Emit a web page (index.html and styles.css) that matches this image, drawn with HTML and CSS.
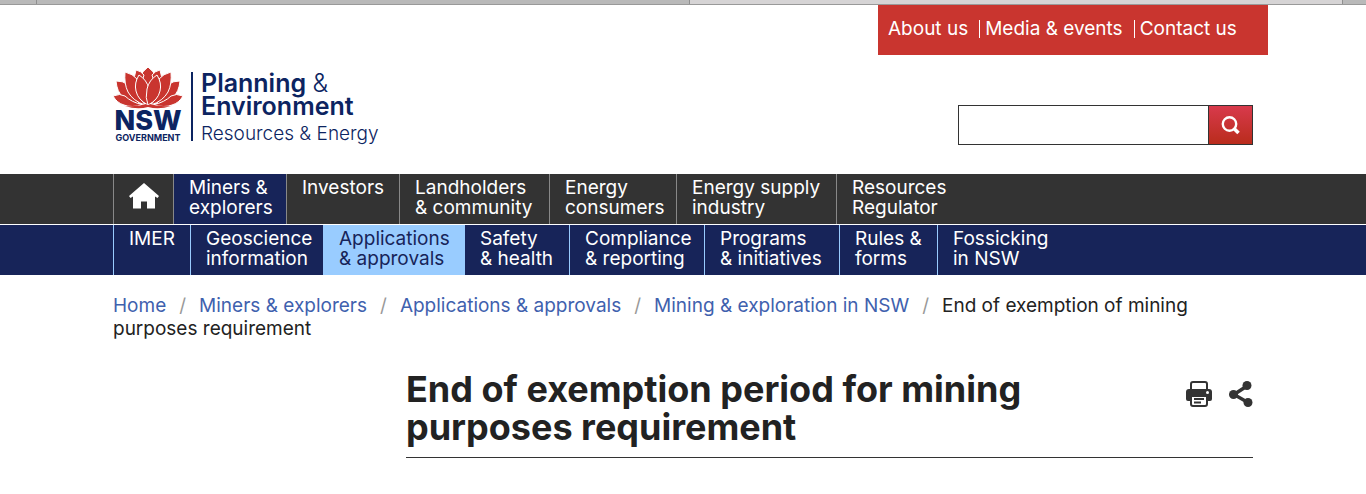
FILE: index.html
```html
<!DOCTYPE html>
<html lang="en">
<head>
    <meta charset="UTF-8">
    <meta name="viewport" content="width=device-width, initial-scale=1.0">
    <title>End of exemption period for mining purposes requirement</title>
    <link rel="stylesheet" href="styles.css">
</head>
<body>

<div class="tab-strip">
    <div class="tab tab-pinned"></div>
    <div class="tab"></div>
    <div class="tab tab-active"></div>
    <div class="tab tab-add"></div>
</div>

<header class="header">
    <a class="logo" href="#">
        <span class="crest">
            <svg class="waratah" width="70" height="42" viewBox="0 0 70 42" aria-hidden="true">
                <g fill="#c9352f" stroke="#fff" stroke-width="1">
                    <path d="M35 0Q40 4 43 9L41 26H29L27 9Q30 4 35 0Z"/>
                    <path d="M23 3Q28 4 31 8L26 24L19 20Z"/>
                    <path d="M47 3Q42 4 39 8L44 24L51 20Z"/>
                    <path d="M3 14Q10 14 14 17Q16 26 27 37Q17 36 10 30Q4 25 3 14Z"/>
                    <path d="M67 14Q60 14 56 17Q54 26 43 37Q53 36 60 30Q66 25 67 14Z"/>
                    <path d="M0 29Q7 26 12 29Q18 35 30 38Q18 41 11 38Q4 36 0 29Z"/>
                    <path d="M70 29Q63 26 58 29Q52 35 40 38Q52 41 59 38Q66 36 70 29Z"/>
                    <path d="M12 5Q20 7 24 12Q22 25 32 38Q20 34 15 25Q11 17 12 5Z"/>
                    <path d="M58 5Q50 7 46 12Q48 25 38 38Q50 34 55 25Q59 17 58 5Z"/>
                    <path d="M26 8Q34 13 36 22Q38 31 35 38Q25 33 23 24Q21 16 26 8Z"/>
                    <path d="M44 8Q36 13 34 22Q32 31 35 38Q45 33 47 24Q49 16 44 8Z"/>
                </g>
                <path d="M12 39Q24 40 33 37Q35 39 37 37Q46 40 58 39Q46 43 35 40Q24 43 12 39Z" fill="#c9352f"/>
            </svg>
            <span class="nsw">NSW</span>
            <span class="government">GOVERNMENT</span>
        </span>
        <span class="department">
            <span class="dept-name">Planning <span class="amp">&amp;</span><br>Environment</span>
            <span class="division">Resources &amp; Energy</span>
        </span>
    </a>
    <div class="header-right">
        <nav class="top-links">
            <a href="#">About us</a>
            <a href="#">Media &amp; events</a>
            <a href="#">Contact us</a>
        </nav>
        <form class="search">
            <input type="text" class="search-box" aria-label="Search">
            <button type="button" class="search-button" aria-label="Search">
                <svg width="20" height="20" viewBox="0 0 20 20" fill="none" stroke="#fff">
                    <circle cx="8.500" cy="9" r="6.700" stroke-width="2.400"/>
                    <path d="M12.500 13l5 5" stroke-width="3.600"/>
                </svg>
            </button>
        </form>
    </div>
</header>

<nav class="main-nav">
    <ul class="nav-list main-list">
        <li><a class="home" href="#" aria-label="Home">
            <svg width="30" height="26" viewBox="0 0 30 26" fill="#fff">
                <path d="M15 0L30 13L28.500 15L26 13.500V25.500H18V18.500H12V25.500H4V13.500L1.500 15L0 13Z"/>
            </svg>
        </a></li>
        <li><a class="current" href="#">Miners &amp;<br>explorers</a></li>
        <li><a href="#">Investors</a></li>
        <li><a href="#">Landholders<br>&amp; community</a></li>
        <li><a href="#">Energy<br>consumers</a></li>
        <li><a href="#">Energy supply<br>industry</a></li>
        <li><a href="#">Resources<br>Regulator</a></li>
    </ul>
</nav>

<nav class="sub-nav">
    <ul class="nav-list sub-list">
        <li><a href="#">IMER</a></li>
        <li><a href="#">Geoscience<br>information</a></li>
        <li class="selected"><a href="#">Applications<br>&amp; approvals</a></li>
        <li><a href="#">Safety<br>&amp; health</a></li>
        <li><a href="#">Compliance<br>&amp; reporting</a></li>
        <li><a href="#">Programs<br>&amp; initiatives</a></li>
        <li><a href="#">Rules &amp;<br>forms</a></li>
        <li><a href="#">Fossicking<br>in NSW</a></li>
    </ul>
</nav>

<main class="container">
    <div class="breadcrumb">
        <a href="#">Home</a><span class="slash">/</span><a href="#">Miners &amp; explorers</a><span class="slash">/</span><a href="#">Applications &amp; approvals</a><span class="slash">/</span><a href="#">Mining &amp; exploration in NSW</a><span class="slash">/</span>End of exemption of mining purposes requirement
    </div>

    <div class="page-title">
        <h1>End of exemption period for mining purposes requirement</h1>
        <div class="tools">
            <button type="button" aria-label="Print">
                <svg width="26" height="26" viewBox="0 0 26 26">
                    <path d="M5 9V3Q5 1 7 1H19Q21 1 21 3V9" fill="none" stroke="#333" stroke-width="2"/>
                    <path d="M3 8H23Q26 8 26 11V18Q26 20 24 20H2Q0 20 0 18V11Q0 8 3 8Z" fill="#333"/>
                    <circle cx="21.500" cy="11.500" r="1.500" fill="#fff"/>
                    <path d="M5 15H21V23Q21 25 19 25H7Q5 25 5 23Z" fill="#fff" stroke="#333" stroke-width="2"/>
                    <path d="M8 18H18M8 21.500H15" stroke="#333" stroke-width="2"/>
                </svg>
            </button>
            <button type="button" aria-label="Share">
                <svg width="24" height="26" viewBox="0 0 24 26" fill="#333">
                    <path d="M18 5L5 13.500L19 21.500" fill="none" stroke="#333" stroke-width="3.500"/>
                    <circle cx="18" cy="4.500" r="4.500"/>
                    <circle cx="4.500" cy="13.500" r="4.500"/>
                    <circle cx="19" cy="21.500" r="4.500"/>
                </svg>
            </button>
        </div>
    </div>
</main>

</body>
</html>
```
FILE: styles.css
```css
* {
    box-sizing: border-box;
}
body {
    margin: 0;
    font-family: Inter, Arial, sans-serif;
    font-size: 19px;
    color: #222;
    background-color: #fff;
}
a {
    text-decoration: none;
}

/* Browser tab edge */
.tab-strip {
    display: flex;
    height: 5px;
    background-color: #b9b9b9;
    border-bottom: 1px solid #999;
}
.tab {
    flex: 1;
    border-right: 1px solid #8f8f8f;
}
.tab-pinned {
    flex: 0 0 37px;
}
.tab-active {
    background-color: #d6d4d5;
}
.tab-add {
    flex: 0 0 23px;
    border-right: 0;
}

/* Header */
.header {
    display: flex;
    justify-content: space-between;
    max-width: 1170px;
    margin: 0 auto;
    padding-bottom: 29px;
}
.logo {
    display: flex;
    padding: 62px 0 0 15px;
    color: #0c2461;
}
.crest {
    display: flex;
    flex-direction: column;
    align-items: center;
    width: 70px;
}
.waratah {
    display: block;
}
.nsw {
    font-size: 27px;
    line-height: 24px;
    font-weight: 800;
}
.government {
    font-size: 9px;
    line-height: 9px;
    font-weight: 700;
}
.department {
    display: flex;
    flex-direction: column;
    height: 69px;
    margin: 5px 0 0 8px;
    padding-left: 8px;
    border-left: 2px solid #0c2461;
}
.dept-name {
    font-size: 25px;
    line-height: 23px;
    font-weight: 600;
}
.amp {
    font-weight: 300;
}
.division {
    padding-top: 4px;
    font-size: 19px;
    line-height: 23px;
    font-weight: 300;
}
.header-right {
    display: flex;
    flex-direction: column;
    align-items: flex-end;
}
.top-links {
    display: flex;
    align-items: flex-start;
    width: 390px;
    height: 50px;
    padding: 15px 10px;
    background-color: #c9352f;
}
.top-links a {
    padding-right: 11px;
    line-height: 18px;
    color: #fff;
}
.top-links a + a {
    padding-left: 5px;
    border-left: 1px solid #fff;
}
.search {
    display: flex;
    width: 295px;
    height: 40px;
    margin: 50px 15px 0 0;
    border: 1px solid #333;
}
.search-box {
    flex: 1;
    min-width: 0;
    padding: 0 10px;
    border: 0;
    font: inherit;
}
.search-button {
    display: flex;
    align-items: center;
    justify-content: center;
    width: 44px;
    padding: 0;
    border: 0;
    border-left: 1px solid #333;
    background: linear-gradient(#d83a4c, #b92c1c);
}

/* Navigation */
.main-nav {
    background-color: #333;
    border-bottom: 1px solid #fff;
}
.sub-nav {
    background-color: #172459;
}
.nav-list {
    display: grid;
    max-width: 1140px;
    margin: 0 auto;
    padding: 0;
    list-style: none;
}
.main-list {
    grid-template-columns: 60px 113px 113px 150px 127px 160px auto;
}
.sub-list {
    grid-template-columns: 77px 133px 142px 104px 135px 135px 98px auto;
}
.nav-list li {
    border-left: 1px solid #888;
}
.sub-list li {
    border-color: #99ccff;
}
.nav-list a {
    display: block;
    height: 50px;
    padding: 4px 0 6px 15px;
    line-height: 20px;
    color: #fff;
    white-space: nowrap;
}
.nav-list .home {
    padding-top: 9px;
}
.nav-list .current {
    background-color: #172459;
}
.sub-list .selected {
    background-color: #99ccff;
}
.sub-list .selected a {
    color: #172459;
}
.sub-list .selected + li {
    border-left: 0;
}

/* Content */
.container {
    max-width: 1140px;
    margin: 0 auto;
}
.breadcrumb {
    padding-top: 19px;
    line-height: 23px;
}
.breadcrumb a {
    color: #3f61ae;
}
.slash {
    padding: 0 13px;
    color: #999;
}
.page-title {
    display: flex;
    justify-content: space-between;
    margin: 30px 0 0 293px;
    padding-bottom: 11px;
    border-bottom: 1px solid #333;
}
h1 {
    max-width: 660px;
    margin: 0;
    font-size: 36px;
    line-height: 38px;
    font-weight: 700;
}
.tools {
    display: flex;
    align-items: flex-start;
    gap: 17px;
    padding-top: 11px;
}
.tools button {
    padding: 0;
    border: 0;
    background: none;
}
.tools svg {
    display: block;
}
```
